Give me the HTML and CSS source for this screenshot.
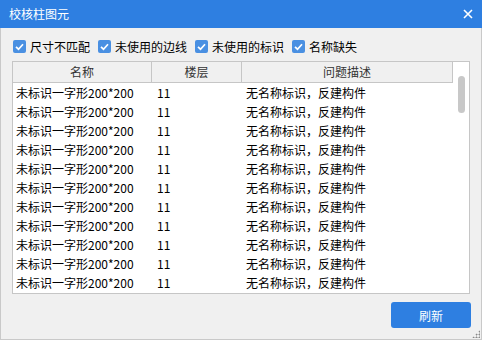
FILE: index.html
```html
<!DOCTYPE html>
<html lang="zh-CN">
<head>
    <meta charset="UTF-8">
    <title>校核柱图元</title>
    <link rel="stylesheet" href="styles.css">
</head>
<body>
    <div class="dialog">
        <!-- Title bar -->
        <div class="title-bar">
            <span class="title">校核柱图元</span>
            <button class="close-btn">
                <svg width="10" height="10" viewBox="0 0 10 10">
                    <path d="M1 1 L9 9 M9 1 L1 9" stroke="#fff" stroke-width="1.6"/>
                </svg>
            </button>
        </div>

        <div class="dialog-body">
            <!-- Filters -->
            <div class="filters">
                <label class="check"><span class="box"></span>尺寸不匹配</label>
                <label class="check"><span class="box"></span>未使用的边线</label>
                <label class="check"><span class="box"></span>未使用的标识</label>
                <label class="check"><span class="box"></span>名称缺失</label>
            </div>

            <!-- Result table -->
            <div class="grid">
                <div class="grid-head">
                    <div class="col col-name">名称</div>
                    <div class="col col-floor">楼层</div>
                    <div class="col col-desc">问题描述</div>
                </div>
                <div class="grid-main">
                    <div class="rows" id="rows"></div>
                    <div class="scrollbar"><div class="thumb"></div></div>
                </div>
            </div>

            <div class="footer">
                <button class="btn-primary">刷新</button>
            </div>
            <div class="grip"></div>
        </div>
    </div>

    <script>
        const rows = document.getElementById('rows');
        for (let i = 0; i < 11; i++) {
            const row = document.createElement('div');
            row.className = 'row';
            row.innerHTML =
                '<div class="cell col-name">未标识一字形200*200</div>' +
                '<div class="cell col-floor">11</div>' +
                '<div class="cell col-desc">无名称标识，反建构件</div>';
            rows.appendChild(row);
        }
    </script>
</body>
</html>
```

FILE: styles.css
```css
* {
    margin: 0;
    padding: 0;
    box-sizing: border-box;
}

body {
    font-family: "Noto Sans CJK SC", "Noto Sans", sans-serif;
    font-size: 12px;
    color: #000;
    background: #f0f0f0;
}

.dialog {
    width: 482px;
    height: 340px;
    display: flex;
    flex-direction: column;
}

/* Title bar */
.title-bar {
    height: 28px;
    background: #2e7fe1;
    display: flex;
    align-items: center;
    justify-content: space-between;
    padding: 0 9px;
    color: #fff;
}

.title {
    font-size: 12px;
    line-height: 14px;
}

.close-btn {
    background: none;
    border: none;
    width: 10px;
    height: 10px;
    display: flex;
    margin-right: 0;
}

.dialog-body {
    flex: 1;
    position: relative;
    border: 1px solid #c9c9c9;
    border-top: none;
    padding: 0 11px;
    background: #f0f0f0;
}

/* Filters */
.filters {
    display: flex;
    align-items: center;
    height: 33px;
    padding-top: 4px;
    padding-left: 1px;
}

.check {
    display: flex;
    align-items: center;
    margin-right: 8px;
    line-height: 14px;
}

.box {
    width: 13px;
    height: 13px;
    border-radius: 2px;
    background: #4a90e2 url("data:image/svg+xml,%3Csvg xmlns='http://www.w3.org/2000/svg' width='13' height='13'%3E%3Cpath d='M3 6.8 L5.5 9.2 L10 4.2' fill='none' stroke='white' stroke-width='1.7'/%3E%3C/svg%3E") no-repeat center;
    margin-right: 4px;
}

/* Table */
.grid {
    border: 1px solid #c6c6c6;
    background: #fff;
    height: 233px;
    display: flex;
    flex-direction: column;
    position: relative;
}

.grid-head {
    display: flex;
    height: 21px;
    width: 440px;
    background: #f0f0f0;
    border-bottom: 1px solid #c6c6c6;
    border-right: 1px solid #c6c6c6;
    color: #333;
}

.grid-head .col {
    text-align: center;
    line-height: 20px;
    border-right: 1px solid #c6c6c6;
}

.grid-head .col-desc {
    border-right: none;
}

.col-name { width: 139px; }
.col-floor { width: 90px; }
.col-desc { width: 210px; }

.grid-main {
    flex: 1;
    display: flex;
}

.rows {
    flex: 1;
}

.row {
    display: flex;
    height: 19px;
    line-height: 19px;
}

.cell {
    white-space: nowrap;
    overflow: hidden;
}

.row .col-name { padding-left: 3px; }
.row .col-floor { padding-left: 5px; }
.row .col-desc { padding-left: 4px; }

.scrollbar {
    position: absolute;
    top: 0;
    right: 0;
    width: 16px;
    height: 100%;
    background: #fff;
}

.thumb {
    width: 7px;
    height: 37px;
    margin: 14px 0 0 5px;
    border-radius: 4px;
    background: #c8c8c8;
}

/* Footer */
.footer {
    display: flex;
    justify-content: flex-end;
    padding-top: 8px;
}

.btn-primary {
    width: 80px;
    height: 26px;
    border: none;
    border-radius: 3px;
    background: #2e7fe1;
    color: #fff;
    font-family: inherit;
    font-size: 12px;
    margin-right: -1px;
}

.grip {
    position: absolute;
    right: 1px;
    bottom: 1px;
    width: 8px;
    height: 8px;
    background:
        radial-gradient(circle, #8a8a8a 0.9px, transparent 1.1px) 0 0 / 3px 3px;
    clip-path: polygon(100% 0, 100% 100%, 0 100%);
}
```
